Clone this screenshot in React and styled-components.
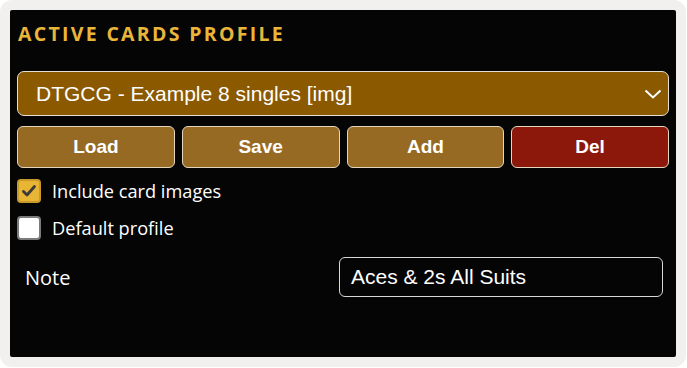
import React, { useState } from "react";
import styled, { createGlobalStyle } from "styled-components";

const GlobalStyle = createGlobalStyle`
    html, body {
        margin: 0;
        padding: 0;
        background: #ffffff;
    }
`;

const Frame = styled.div`
    box-sizing: border-box;
    width: 686px;
    height: 367px;
    border: 10px solid #f1f0ee;
    border-radius: 12px;
    background: #050505;
    padding: 0 7px 0 7px;
    display: flex;
    flex-direction: column;
`;

const Title = styled.h2`
    margin: 0;
    padding: 10px 0 0 1px;
    height: 61px;
    box-sizing: border-box;
    font-family: "Open Sans", "Noto Sans", sans-serif;
    font-weight: 700;
    font-size: 19.5px;
    letter-spacing: 2.3px;
    color: #e9b53a;
`;

const SelectBox = styled.div`
    height: 45px;
    box-sizing: border-box;
    border: 1px solid #e6e0d4;
    border-radius: 7px;
    background: #8a5900;
    display: flex;
    align-items: center;
    padding: 0 18px;
    font-family: "Liberation Sans", Arial, sans-serif;
    font-size: 21px;
    color: #ffffff;
`;

const Chevron = styled.svg`
    margin-left: auto;
    margin-right: -12px;
`;

const ButtonRow = styled.div`
    display: grid;
    grid-template-columns: repeat(4, 1fr);
    gap: 7px;
    margin-top: 10px;
`;

const Button = styled.button`
    height: 42px;
    border: 1px solid #e3d6bd;
    border-radius: 6px;
    background: ${(p) => (p.$danger ? "#8c180b" : "#976a24")};
    color: #ffffff;
    font-family: "Liberation Sans", Arial, sans-serif;
    font-weight: 700;
    font-size: 19px;
    padding: 0;
`;

const CheckRow = styled.label`
    display: flex;
    align-items: center;
    gap: 11px;
    height: 24px;
    margin-top: ${(p) => p.$top}px;
    font-family: "Open Sans", "Noto Sans", sans-serif;
    font-size: 18.2px;
    color: #ffffff;
`;

const Box = styled.span`
    width: 24px;
    height: 24px;
    box-sizing: border-box;
    border-radius: 4px;
    display: flex;
    align-items: center;
    justify-content: center;
    background: ${(p) => (p.$checked ? "#e8b534" : "#ffffff")};
    border: 2px solid ${(p) => (p.$checked ? "#c99a2a" : "#7b7b7b")};
`;

const NoteRow = styled.div`
    display: flex;
    align-items: center;
    justify-content: space-between;
    margin-top: 17px;
    padding-left: 8px;
    padding-right: 6px;
`;

const NoteLabel = styled.span`
    font-family: "Open Sans", "Noto Sans", sans-serif;
    font-size: 20px;
    color: #ffffff;
`;

const NoteInput = styled.div`
    width: 324px;
    height: 40px;
    box-sizing: border-box;
    border: 1px solid #d8d8d8;
    border-radius: 6px;
    display: flex;
    align-items: center;
    padding: 0 11px;
    font-family: "Liberation Sans", Arial, sans-serif;
    font-size: 21px;
    color: #ffffff;
`;

function Checkbox({ checked, label, top }) {
    return (
        <CheckRow $top={top}>
            <Box $checked={checked}>
                {checked && (
                    <svg width="16" height="16" viewBox="0 0 16 16">
                        <path
                            d="M2.5 8.5 L6 12 L13.5 3.5"
                            fill="none"
                            stroke="#3a3a3a"
                            strokeWidth="2.8"
                            strokeLinecap="round"
                            strokeLinejoin="round"
                        />
                    </svg>
                )}
            </Box>
            {label}
        </CheckRow>
    );
}

const App = () => {
    const [buttons] = useState(["Load", "Save", "Add", "Del"]);

    return (
        <>
            <GlobalStyle />
            <Frame>
                <Title>ACTIVE CARDS PROFILE</Title>

                <SelectBox>
                    DTGCG - Example 8 singles [img]
                    <Chevron width="18" height="12" viewBox="0 0 18 12">
                        <path
                            d="M1.5 2.5 L9 9.5 L16.5 2.5"
                            fill="none"
                            stroke="#ffffff"
                            strokeWidth="2"
                        />
                    </Chevron>
                </SelectBox>

                <ButtonRow>
                    {buttons.map((b) => (
                        <Button key={b} $danger={b === "Del"}>
                            {b}
                        </Button>
                    ))}
                </ButtonRow>

                <Checkbox checked label="Include card images" top={11} />
                <Checkbox label="Default profile" top={13} />

                <NoteRow>
                    <NoteLabel>Note</NoteLabel>
                    <NoteInput>Aces &amp; 2s All Suits</NoteInput>
                </NoteRow>
            </Frame>
        </>
    );
};

export default App;
